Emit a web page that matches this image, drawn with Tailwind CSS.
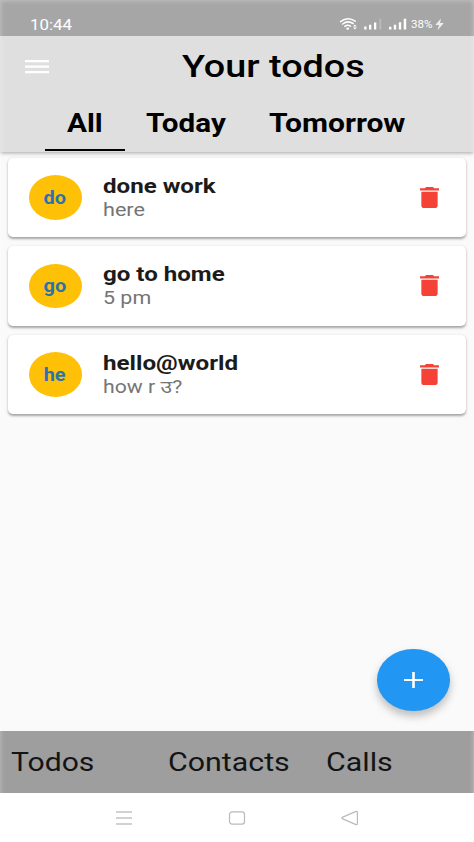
<!DOCTYPE html>
<html lang="en">
<head>
<meta charset="utf-8">
<title>Your todos</title>
<script src="https://cdn.jsdelivr.net/npm/@tailwindcss/browser@4"></script>
</head>
<body class="bg-white">
<div class="relative flex h-[842px] w-[474px] flex-col overflow-hidden bg-[#fafafa] font-['Roboto','Noto_Sans',sans-serif] whitespace-nowrap">

  <!-- status bar -->
  <div class="relative z-20 flex h-[35.5px] shrink-0 items-center bg-[#a6a6a6] pt-[13px] pl-[30px] text-white">
    <span class="w-[309px] origin-left scale-x-[1.2] pt-px"><span class="text-[14px] leading-[22px]">10:44</span></span>
    <svg class="h-[14px] w-[107px] shrink-0" viewBox="0 0 107 14" fill="none">
      <g stroke="#fff" stroke-width="1.5" stroke-linecap="round">
        <path d="M1.6 4.6Q8.7-1 16.2 4.2"/>
        <path d="M3.6 7Q8.8 3 14.2 6.5"/>
        <path d="M5.8 9.4Q8.7 7.4 11.5 9.2"/>
      </g>
      <ellipse cx="8.7" cy="11.7" rx="1.5" ry="1.1" fill="#fff"/>
      <path d="M14 9.400l1.900-2 1.900 2zM14 10.500h3.800l-1.900 2z" fill="#fff"/>
      <g fill="#fff">
        <path d="M25.2 9.6h2.3v3h-2.3zM30 7.8h2.3v4.8H30zM35 5.4h2.3v7.2H35z"/>
        <path d="M40.4 1.6h1.8v11h-1.8z" fill-opacity=".25"/>
        <path d="M50 9.8h2.4v2.8H50zM54.8 7.8h2.4v4.8h-2.4zM59.8 5.2h2.4v7.4h-2.4zM64.7 1.8h2.5v10.8h-2.5z"/>
      </g>
    </svg>
    <span class="-ml-[35.500px] w-[22px] origin-left scale-x-[1.1] pt-px text-[10.5px] leading-[14px]">38%</span>
    <svg class="ml-[2px] h-[13px] w-[9px]" viewBox="0 0 9 13" fill="#fff" fill-opacity=".8"><path d="M6 .5L.3 7H4L2.6 12.3 8.8 5H5z"/></svg>
  </div>

  <!-- app bar with tabs -->
  <header class="relative z-10 h-[116px] shrink-0 bg-[#dfdfdf] shadow-[0_1px_4px_rgba(0,0,0,0.35)]">
    <div class="flex h-[63px] items-center pl-[25px]">
      <svg class="h-[14px] w-[24px] shrink-0" viewBox="0 0 24 14" fill="#fff"><path d="M0 0h24v2.2H0zM0 5.6h24v2.2H0zM0 11h24v2.2H0z"/></svg>
      <h1 class="ml-[133px] origin-left scale-x-[1.218] text-[31px] leading-[40px] font-medium text-black">Your todos</h1>
    </div>
    <nav class="flex h-[52.500px] pl-[45px] text-[25px] leading-[50px] font-bold text-black">
      <span class="h-[52.500px] w-[79.5px] border-b-[2px] border-black pl-[22px]"><span class="inline-block origin-left scale-x-[1.19]">All</span></span>
      <span class="w-[144.500px] pl-[21.5px]"><span class="inline-block origin-left scale-x-[1.185]">Today</span></span>
      <span><span class="inline-block origin-left scale-x-[1.2]">Tomorrow</span></span>
    </nav>
  </header>

  <!-- todo list -->
  <main class="flex flex-1 flex-col gap-[9px] px-[8px] pt-[6px]">
    <article class="flex h-[79.5px] items-center rounded-[5px] bg-white pl-[21px] shadow-[0_1.5px_2.5px_rgba(0,0,0,0.34)]">
      <div class="flex h-[44.5px] w-[53px] items-center justify-center rounded-[50%] bg-[#ffc107]"><span class="-ml-[2px] scale-x-[1.14] pt-px text-[17.5px] leading-[20px] font-bold text-[#2c73a8]">do</span></div>
      <div class="ml-[21px] w-[313px] pt-px">
        <div class="w-fit origin-left scale-x-[1.175] text-[20.5px] leading-[23px] font-bold text-[#1b1b1b]">done work</div>
        <div class="w-fit origin-left scale-x-[1.2] text-[18px] leading-[23px] text-[#757575]">here</div>
      </div>
      <svg class="ml-[4px] h-[21px] w-[19px]" viewBox="5 3 14 18" preserveAspectRatio="none" fill="#f44336"><path d="M6 19c0 1.1.9 2 2 2h8c1.1 0 2-.9 2-2V7H6zM19 4h-3.500l-1-1h-5l-1 1H5v2h14z"/></svg>
    </article>
    <article class="flex h-[79.5px] items-center rounded-[5px] bg-white pl-[21px] shadow-[0_1.5px_2.5px_rgba(0,0,0,0.34)]">
      <div class="flex h-[44.5px] w-[53px] items-center justify-center rounded-[50%] bg-[#ffc107]"><span class="-ml-[2px] scale-x-[1.14] pt-px text-[17.5px] leading-[20px] font-bold text-[#2c73a8]">go</span></div>
      <div class="ml-[21px] w-[313px] pt-px">
        <div class="w-fit origin-left scale-x-[1.175] text-[20.5px] leading-[23px] font-bold text-[#1b1b1b]">go to home</div>
        <div class="w-fit origin-left scale-x-[1.19] text-[18px] leading-[23px] text-[#757575]">5 pm</div>
      </div>
      <svg class="ml-[4px] h-[21px] w-[19px]" viewBox="5 3 14 18" preserveAspectRatio="none" fill="#f44336"><path d="M6 19c0 1.1.9 2 2 2h8c1.1 0 2-.9 2-2V7H6zM19 4h-3.500l-1-1h-5l-1 1H5v2h14z"/></svg>
    </article>
    <article class="flex h-[79.5px] items-center rounded-[5px] bg-white pl-[21px] shadow-[0_1.5px_2.5px_rgba(0,0,0,0.34)]">
      <div class="flex h-[44.5px] w-[53px] items-center justify-center rounded-[50%] bg-[#ffc107]"><span class="-ml-[2px] scale-x-[1.14] pt-px text-[17.5px] leading-[20px] font-bold text-[#2c73a8]">he</span></div>
      <div class="ml-[21px] w-[313px] pt-px">
        <div class="w-fit origin-left scale-x-[1.18] text-[20.5px] leading-[23px] font-bold text-[#1b1b1b]">hello@world</div>
        <div class="w-fit origin-left scale-x-[1.18] text-[18px] leading-[23px] text-[#757575]">how r उ?</div>
      </div>
      <svg class="ml-[4px] h-[21px] w-[19px]" viewBox="5 3 14 18" preserveAspectRatio="none" fill="#f44336"><path d="M6 19c0 1.1.9 2 2 2h8c1.1 0 2-.9 2-2V7H6zM19 4h-3.500l-1-1h-5l-1 1H5v2h14z"/></svg>
    </article>
  </main>

  <!-- floating add button -->
  <button class="absolute top-[649px] left-[376.500px] flex h-[62px] w-[73.500px] items-center justify-center rounded-[50%] bg-[#2196f3] shadow-[0_5px_9px_rgba(0,0,0,0.25)]">
    <svg class="h-[16px] w-[19px]" viewBox="0 0 19 16" fill="#fff"><path d="M8.200 0h2.600v16H8.200zM0 6.900h19v2.200H0z"/></svg>
  </button>

  <!-- bottom tabs -->
  <nav class="flex h-[62px] shrink-0 bg-[#9e9e9e] pl-[11px] text-[25.500px] leading-[62px] text-[#141414]">
    <span class="w-[157px]"><span class="inline-block origin-left scale-x-[1.18]">Todos</span></span>
    <span class="w-[158px]"><span class="inline-block origin-left scale-x-[1.19]">Contacts</span></span>
    <span><span class="inline-block origin-left scale-x-[1.19]">Calls</span></span>
  </nav>

  <!-- system navigation -->
  <div class="flex h-[49px] shrink-0 items-center bg-white pl-[115px]">
    <svg class="h-[16px] w-[18px]" viewBox="0 0 18 16" fill="none" stroke="#c4c4c4" stroke-width="1.300"><path d="M1 2h16M1 8h16M1 14h16"/></svg>
    <svg class="ml-[95px] h-[16px] w-[18px]" viewBox="0 0 18 16" fill="none" stroke="#bababa" stroke-width="1.200"><rect x="1.500" y="1.800" width="15" height="12.400" rx="2.600"/></svg>
    <svg class="ml-[94.500px] h-[16px] w-[18px]" viewBox="0 0 18 16" fill="none" stroke="#bababa" stroke-width="1.200" stroke-linejoin="round"><path d="M15 1.400Q16.400 1 16.400 2.200V13.800Q16.400 15 15 14.600L1.200 8.600Q.4 8 1.200 7.400z"/></svg>
  </div>

  <!-- soft screen edge -->
  <div class="pointer-events-none absolute inset-x-0 top-0 z-20 h-[800px] shadow-[inset_0_0_4px_1px_rgba(255,255,255,0.3)]"></div>
</div>
</body>
</html>
